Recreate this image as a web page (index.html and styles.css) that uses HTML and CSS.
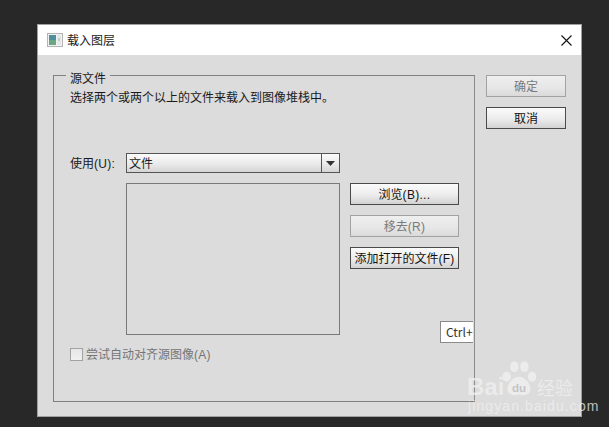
FILE: index.html
```html
<!DOCTYPE html>
<html lang="zh">
<head>
<meta charset="utf-8">
<title>载入图层</title>
<link rel="stylesheet" href="styles.css">
</head>
<body>
<div class="dialog">
  <div class="titlebar">
    <svg class="app-icon" width="16" height="14" viewBox="0 0 16 14">
      <rect x="0.5" y="0.5" width="15" height="13" fill="#f2f2f2" stroke="#b4b4b4"/>
      <rect x="2" y="2" width="7" height="10" fill="#4f8f9a"/>
      <rect x="2" y="7" width="7" height="5" fill="#6aa884"/>
      <rect x="10" y="2" width="4" height="10" fill="#e4e9e8"/>
      <rect x="11" y="5" width="2" height="3" fill="#bfcfcf"/>
    </svg>
    <span class="title">载入图层</span>
    <svg class="close" width="11" height="11" viewBox="0 0 11 11">
      <path d="M0.5 0.5 L10.5 10.5 M10.5 0.5 L0.5 10.5" stroke="#111" stroke-width="1.1" fill="none"/>
    </svg>
  </div>
  <div class="body">
    <div class="group">
      <span class="legend">源文件</span>
      <p class="desc">选择两个或两个以上的文件来载入到图像堆栈中。</p>
      <div class="use-row">
        <label class="use-label">使用<span class="lat">(U):</span></label>
        <div class="combo">
          <span class="combo-text">文件</span>
          <span class="combo-btn"><svg width="9" height="5" viewBox="0 0 9 5"><path d="M0 0 H9 L4.5 5 Z" fill="#333"/></svg></span>
        </div>
      </div>
      <div class="file-row">
        <div class="listbox"></div>
        <div class="file-btns">
          <button class="btn">浏览<span class="lat">(B)...</span></button>
          <button class="btn disabled">移去<span class="lat">(R)</span></button>
          <button class="btn">添加打开的文件<span class="lat">(F)</span></button>
        </div>
      </div>
      <div class="check-row">
        <span class="checkbox"></span>
        <span class="check-label">尝试自动对齐源图像<span class="lat">(A)</span></span>
      </div>
      <div class="tip">Ctrl+</div>
    </div>
    <div class="side">
      <button class="btn disabled">确定</button>
      <button class="btn">取消</button>
    </div>
  </div>
</div>
<div class="watermark">
  <svg class="paw" width="34" height="36" viewBox="0 0 44 46">
    <g fill="#f0f0f0" fill-opacity="0.8">
      <ellipse cx="6" cy="20" rx="5.5" ry="6.5"/>
      <ellipse cx="16" cy="7" rx="5.5" ry="7"/>
      <ellipse cx="29" cy="7" rx="5.5" ry="7"/>
      <ellipse cx="39" cy="20" rx="5.5" ry="6.5"/>
      <path d="M22 20 C30 20 37 29 37 36 C37 44 28 45 22 43 C16 45 7 44 7 36 C7 29 14 20 22 20 Z"/>
    </g>
    <text x="22" y="40" class="paw-text">du</text>
  </svg>
  <span class="wm-bai">Bai</span>
  <span class="wm-cn">经验</span>
  <span class="wm-url">jingyan.baidu.com</span>
</div>
</body>
</html>
```
FILE: styles.css
```css
html, body {
  margin: 0;
  padding: 0;
  width: 609px;
  height: 427px;
  overflow: hidden;
  background: #282828;
  font-family: "Noto Sans CJK SC", "Liberation Sans", sans-serif;
  font-size: 12px;
  color: #1a1a1a;
}
.lat {
  font-family: "Liberation Sans", sans-serif;
  font-size: 12px;
  letter-spacing: 0.3px;
}
.dialog {
  position: absolute;
  left: 37px;
  top: 24px;
  width: 545px;
  height: 393px;
  box-sizing: border-box;
  border: 1px solid #a0a0a0;
  background: #dcdcdc;
  display: flex;
  flex-direction: column;
}
.titlebar {
  height: 30px;
  flex: none;
  background: #fff;
  display: flex;
  align-items: center;
  padding: 0 9px 0 9px;
}
.app-icon { flex: none; margin-right: 4px; }
.title { flex: 1; line-height: 14px; }
.close { flex: none; }
.body {
  flex: 1;
  display: flex;
  align-items: flex-start;
  padding: 20px 15px 0 15px;
  gap: 11px;
}
.group {
  position: relative;
  box-sizing: border-box;
  width: 422px;
  height: 327px;
  border: 1px solid #808080;
  border-right-color: #8c8c8c;
  padding: 13px 16px 0 16px;
}
.legend {
  position: absolute;
  left: 12px;
  top: -5px;
  padding: 0 4px;
  background: #dcdcdc;
  line-height: 14px;
}
.desc {
  margin: 0;
  line-height: 16px;
}
.use-row {
  display: flex;
  align-items: center;
  margin-top: 48px;
}
.use-label { width: 56px; flex: none; line-height: 16px; }
.combo {
  width: 214px;
  height: 20px;
  box-sizing: border-box;
  border: 1px solid #555;
  display: flex;
  background: linear-gradient(#fbfbfb, #e8e8e8 60%, #d4d4d4);
}
.combo-text { flex: 1; padding-left: 2px; line-height: 18px; }
.combo-btn {
  flex: none;
  width: 17px;
  border-left: 1px solid #555;
  display: flex;
  align-items: center;
  justify-content: center;
}
.file-row {
  display: flex;
  margin: 10px -2px 0 56px;
  gap: 10px;
}
.listbox {
  flex: none;
  width: 214px;
  height: 152px;
  box-sizing: border-box;
  border: 1px solid #7a7a7a;
  background: #dcdcdc;
}
.file-btns {
  flex: none;
  display: flex;
  flex-direction: column;
  gap: 10px;
}
.btn {
  box-sizing: border-box;
  width: 109px;
  height: 22px;
  padding: 0;
  border: 1px solid #4a4a4a;
  background: linear-gradient(#fbfbfb, #ececec 55%, #d2d2d2);
  font: inherit;
  color: #111;
  line-height: 18px;
}
.btn.disabled {
  border-color: #a2a2a2;
  background: linear-gradient(#efefef, #e6e6e6 60%, #dadada);
  color: #7a7a7a;
}
.check-row {
  display: flex;
  align-items: center;
  gap: 3px;
  margin-top: 11px;
}
.checkbox {
  width: 11px;
  height: 11px;
  flex: none;
  border: 1px solid #a2a2a2;
  background: linear-gradient(#e6e6e6, #f0f0f0);
}
.check-label { color: #757575; line-height: 16px; }
.tip {
  position: absolute;
  left: 386px;
  top: 245px;
  width: 33px;
  height: 22px;
  box-sizing: border-box;
  border: 1px solid #8a8a8a;
  border-right: none;
  background: #fff;
  padding-left: 5px;
  line-height: 20px;
  overflow: hidden;
  color: #333;
}
.side {
  display: flex;
  flex-direction: column;
  gap: 10px;
}
.side .btn { width: 80px; }
.watermark {
  position: absolute;
  left: 0;
  top: 0;
  width: 609px;
  height: 427px;
  pointer-events: none;
  color: rgba(240, 240, 240, 0.75);
  font-family: "Liberation Sans", sans-serif;
}
.paw { position: absolute; left: 502px; top: 361px; }
.paw-text {
  font-family: "Liberation Sans", sans-serif;
  font-size: 15px;
  font-weight: 700;
  text-anchor: middle;
  fill: #c4c4c4;
}
.wm-bai {
  position: absolute;
  left: 467px;
  top: 373px;
  font-size: 24px;
  line-height: 28px;
  font-weight: 700;
}
.wm-cn {
  position: absolute;
  left: 537px;
  top: 376px;
  font-family: "Noto Sans CJK SC", sans-serif;
  font-size: 18px;
  line-height: 22px;
}
.wm-url {
  position: absolute;
  left: 468px;
  top: 398px;
  font-size: 14px;
  line-height: 16px;
  letter-spacing: 1.1px;
}
```
